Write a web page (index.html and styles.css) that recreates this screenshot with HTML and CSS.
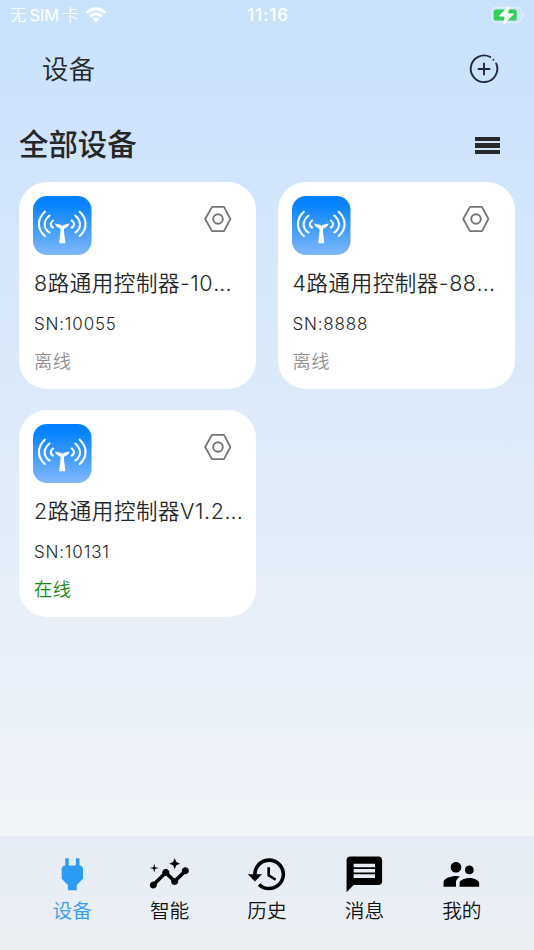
FILE: index.html
```html
<!DOCTYPE html>
<html lang="zh-CN">
<head>
<meta charset="utf-8">
<title>设备</title>
<link rel="stylesheet" href="styles.css">
</head>
<body>
<svg class="defs" width="0" height="0" aria-hidden="true">
  <defs>
    <linearGradient id="tile" x1="0" y1="0" x2="0" y2="1">
      <stop offset="0" stop-color="#007fff"/><stop offset=".15" stop-color="#0784ff"/><stop offset="1" stop-color="#80b8fa"/>
    </linearGradient>
    <symbol id="device" viewBox="0 0 59 59">
      <rect width="58.5" height="59" rx="14" fill="url(#tile)"/>
      <g fill="none" stroke="#fff" stroke-width="2.1" stroke-linecap="round">
        <path d="M11.8 15.7C4 23 4 33 11.8 40M16.5 19.5C10 25 10 32 16.5 36.5M20 24.5C17 27 17 29.5 20 31.7"/>
        <path d="M46.7 15.7C54.5 23 54.5 33 46.7 40M42.3 19.5C48.5 25 48.5 32 42.3 36.5M38.8 24.5C41.8 27 41.8 29.5 38.8 31.7"/>
      </g>
      <path fill="#fff" d="M21.8 27.5C25 28.6 28 28 29.2 29.9C30.5 28 33.5 28.6 36.6 27.5C35.2 31.4 32.5 32.2 30.9 32.7C31 38 32 42 32.3 47.3H26.2C26.5 42 27.5 38 27.6 32.7C26 32.2 23.3 31.4 21.8 27.5Z"/>
    </symbol>
    <symbol id="nut" viewBox="0 0 28 28">
      <path d="M8 1.9H20L26.4 14L20 26.1H8L1.2 14Z" fill="none" stroke="#757575" stroke-width="1.8" stroke-linejoin="round"/>
      <circle cx="14" cy="14" r="4.8" fill="none" stroke="#757575" stroke-width="1.9"/>
    </symbol>
  </defs>
</svg>
<div class="screen">
  <header class="status">
    <div class="carrier"><span>无</span><span class="sim">SIM</span><span>卡</span>
      <svg class="wifi" viewBox="0 0 22 16"><g fill="none" stroke="#fff" stroke-width="3"><path d="M1.3 6Q11-2.2 20.7 6"/><path d="M4.8 9.7Q11 4.5 17.2 9.7"/></g><path fill="#fff" d="M7.3 12.2Q11 9.4 14.7 12.2L11 15.9Z"/></svg>
    </div>
    <div class="time">11:16</div>
    <div class="power"><svg width="35" height="18" viewBox="0 0 35 18"><rect x=".8" y="1.5" width="29.7" height="15" rx="4.2" fill="none" stroke="#fff" stroke-opacity=".4" stroke-width="1.4"/><path d="M32 6.5Q35 9 32 11.5Z" fill="#fff" opacity=".5"/><rect x="2.7" y="3.6" width="23" height="11" rx="2.2" fill="#30d158"/><path d="M17.8.5L8.8 10H14.3L12.8 17.5L22.2 8H16.4Z" fill="#fff" stroke="#fff" stroke-width="1.2" stroke-linejoin="round"/></svg></div>
  </header>
  <div class="appbar">
    <h1>设备</h1>
    <svg class="add" viewBox="0 0 30 30" fill="none" stroke="#25283a" stroke-width="1.9" stroke-linecap="round"><path d="M21.2 3A13.3 13.3 0 1 0 27.2 9.4"/><path d="M15 9.5V20.5M9.5 15H20.5"/><circle cx="24.4" cy="5.7" r=".35" stroke-width="1.2"/></svg>
  </div>
  <div class="section"><h2>全部设备</h2><div class="menu"><i></i><i></i><i></i></div></div>
  <main class="grid">
    <article class="card">
      <div class="top"><svg class="device"><use href="#device"/></svg><svg class="nut"><use href="#nut"/></svg></div>
      <div class="name">8路通用控制器-10<span class="dots">...</span></div><div class="sn">SN:10055</div><div class="state">离线</div>
    </article>
    <article class="card">
      <div class="top"><svg class="device"><use href="#device"/></svg><svg class="nut"><use href="#nut"/></svg></div>
      <div class="name">4路通用控制器-88<span class="dots">...</span></div><div class="sn">SN:8888</div><div class="state">离线</div>
    </article>
    <article class="card">
      <div class="top"><svg class="device"><use href="#device"/></svg><svg class="nut"><use href="#nut"/></svg></div>
      <div class="name">2路通用控制器V1.2<span class="dots">...</span></div><div class="sn">SN:10131</div><div class="state online">在线</div>
    </article>
  </main>
  <nav class="tabs">
    <div class="tab active"><svg viewBox="0 0 24 24"><path d="M16.01 7L16 3h-2v4h-4V3H8v4h-.01C7 6.99 6 7.99 6 8.99v5.49L9.5 18v3h5v-3l3.5-3.51v-5.5c0-1-1-2-1.99-1.99z"/></svg><span>设备</span></div>
    <div class="tab"><svg viewBox="0 0 24 24"><path d="M21 8c-1.45 0-2.26 1.44-1.93 2.51l-3.55 3.56c-.3-.09-.74-.09-1.04 0l-2.55-2.55C12.27 10.45 11.46 9 10 9c-1.45 0-2.27 1.44-1.93 2.52l-4.56 4.55C2.44 15.74 1 16.55 1 18c0 1.1.9 2 2 2 1.45 0 2.26-1.44 1.93-2.51l4.55-4.56c.3.09.74.09 1.04 0l2.55 2.55C12.73 16.55 13.54 18 15 18c1.45 0 2.27-1.44 1.93-2.52l3.56-3.55c1.07.33 2.51-.48 2.51-1.93 0-1.1-.9-2-2-2z"/><path d="M15 9l.94-2.07L18 6l-2.06-.93L15 3l-.92 2.07L12 6l2.08.93zM3.5 11L4 9l2-.5L4 8l-.5-2L3 8l-2 .5L3 9z"/></svg><span>智能</span></div>
    <div class="tab"><svg viewBox="0 0 24 24"><path d="M13 3c-4.97 0-9 4.03-9 9H1l3.89 3.89.07.14L9 12H6c0-3.87 3.13-7 7-7s7 3.13 7 7-3.13 7-7 7c-1.93 0-3.68-.79-4.94-2.06l-1.42 1.42C8.27 19.99 10.51 21 13 21c4.97 0 9-4.03 9-9s-4.03-9-9-9zm-1 5v5l4.28 2.54.72-1.21-3.5-2.08V8H12z"/></svg><span>历史</span></div>
    <div class="tab"><svg viewBox="0 0 24 24"><path d="M20 2H4c-1.1 0-1.99.9-1.99 2L2 22l4-4h14c1.1 0 2-.9 2-2V4c0-1.1-.9-2-2-2zm-2 12H6v-2h12v2zm0-3H6V9h12v2zm0-3H6V6h12v2z"/></svg><span>消息</span></div>
    <div class="tab"><svg viewBox="0 0 24 24"><path d="M16.5 12c1.38 0 2.49-1.12 2.49-2.5S17.88 7 16.5 7C15.12 7 14 8.12 14 9.5s1.12 2.5 2.5 2.5zM9 11c1.66 0 2.99-1.34 2.99-3S10.66 5 9 5C7.34 5 6 6.34 6 8s1.34 3 3 3zm7.5 3c-1.83 0-5.5.92-5.5 2.75V19h11v-2.25c0-1.83-3.67-2.75-5.5-2.75zM9 13c-2.33 0-7 1.17-7 3.5V19h7v-2.25c0-.85.33-2.34 2.37-3.47C10.5 13.1 9.66 13 9 13z"/></svg><span>我的</span></div>
  </nav>
</div>
</body>
</html>
```
FILE: styles.css
```css
* { box-sizing: border-box; }
body { margin: 0; font-family: Inter, "Noto Sans CJK SC", sans-serif; color: #252628; }
svg { display: block; flex: none; }
.defs { position: absolute; }
.screen { width: 534px; height: 950px; display: flex; flex-direction: column; overflow: hidden;
  background: linear-gradient(#c8e2fc 0, #cde3fc 100px, #d2e6fc 200px, #dceafa 400px, #e7eff9 620px, #f2f5f9 836px); }
h1, h2 { margin: 0; }
.status { height: 30px; display: grid; grid-template-columns: 1fr auto 1fr; align-items: center; padding: 0 8px 0 10px; color: #fff; }
.carrier { display: flex; align-items: center; gap: 3px; font-size: 16.5px; line-height: 30px; font-weight: 350; }
.sim { font-size: 16.5px; font-weight: 400; letter-spacing: -.1px; }
.wifi { width: 22px; height: 15.5px; margin-left: 3px; }
.time { font-size: 17px; font-weight: 500; letter-spacing: .9px; }
.power { display: flex; justify-content: flex-end; }
.appbar { height: 78px; padding: 0 35px 0 42px; display: flex; align-items: center; justify-content: space-between; }
h1 { font-size: 26.4px; font-weight: 350; line-height: 40px; letter-spacing: .4px; }
.add { width: 30px; height: 30px; }
.section { height: 74px; padding: 1px 34px 0 19px; display: flex; align-items: center; justify-content: space-between; }
h2 { font-size: 29.4px; font-weight: 500; line-height: 40px; margin-top: -1px; }
.menu { display: grid; gap: 2px; width: 25px; }
.menu i { height: 4.5px; background: #28292b; }
.grid { flex: 1; padding: 0 19px; display: grid; grid-template-columns: 237px 237px; grid-auto-rows: 206.5px; gap: 21.5px; align-content: start; }
.card { background: #fff; border-radius: 28px; padding: 14px 0 0 15px; white-space: nowrap; }
.top { height: 59px; display: flex; justify-content: space-between; padding-right: 24.5px; }
.device { width: 59px; height: 59px; margin-left: -.6px; }
.nut { width: 28px; height: 28px; margin-top: 9.4px; }
.name { margin-top: 11.9px; font-size: 21.5px; font-weight: 350; line-height: 32px; letter-spacing: .55px; }
.dots { letter-spacing: .1px; }
.sn { margin-top: 13px; font-size: 17px; line-height: 24px; letter-spacing: .8px; font-weight: 350; }
.state { margin-top: 12px; font-size: 18.3px; line-height: 26px; font-weight: 350; letter-spacing: .4px; color: #929292; }
.online { color: #158a15; }
.tabs { height: 114px; padding: 17px 23.5px 0; display: flex; background: linear-gradient(#e5ecf5, #ebf0f4); }
.tab { flex: 1; display: flex; flex-direction: column; align-items: center; color: #111; }
.tab svg { width: 42.7px; height: 42.7px; fill: #000; }
.tab span { font-size: 19.7px; line-height: 28px; padding-top: 1px; font-weight: 350; }
.active span { color: #369cf4; }
.active svg { fill: #2c9bf5; }
```
